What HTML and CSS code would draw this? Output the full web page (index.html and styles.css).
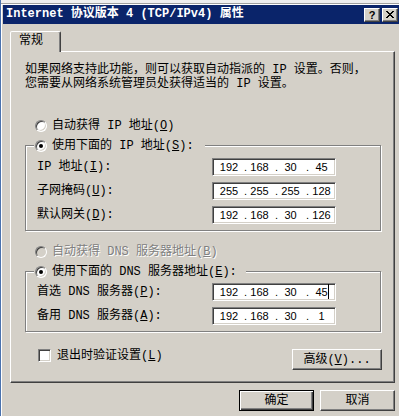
FILE: index.html
```html
<!DOCTYPE html>
<html lang="zh-CN">
<head>
<meta charset="utf-8">
<title>Internet 协议版本 4 (TCP/IPv4) 属性</title>
<link rel="stylesheet" href="styles.css">
</head>
<body>
<div class="win">
  <div class="topstrip"></div>
  <div class="inner">
    <div class="titlebar">
      <span class="title">Internet 协议版本 4 (TCP/IPv4) 属性</span>
      <div class="tbtns">
        <span class="tbtn help">?</span>
        <span class="tbtn close"><svg width="8" height="7" viewBox="0 0 8 7" shape-rendering="crispEdges"><path fill="#000" d="M0 0h2v1H0zM6 0h2v1H6zM1 1h2v1H1zM5 1h2v1H5zM2 2h4v1H2zM3 3h2v1H3zM2 4h4v1H2zM1 5h2v1H1zM5 5h2v1H5zM0 6h2v1H0zM6 6h2v1H6z"/></svg></span>
      </div>
    </div>
    <div class="client">
      <div class="tabs"><div class="tab">常规</div></div>
      <div class="panel">
        <p class="intro">如果网络支持此功能，则可以获取自动指派的 IP 设置。否则，<br>您需要从网络系统管理员处获得适当的 IP 设置。</p>

        <div class="opt first"><span class="radio"></span><span>自动获得 IP 地址(<u>O</u>)</span></div>
        <div class="group">
          <div class="legend l1"><span class="radio on"></span><span>使用下面的 IP 地址(<u>S</u>):</span></div>
          <div class="rows r1">
            <div class="row"><span class="lbl">IP 地址(<u>I</u>):</span><div class="ip"><span>192</span><i>.</i><span>168</span><i>.</i><span>30</span><i>.</i><span>45</span></div></div>
            <div class="row"><span class="lbl">子网掩码(<u>U</u>):</span><div class="ip"><span>255</span><i>.</i><span>255</span><i>.</i><span>255</span><i>.</i><span>128</span></div></div>
            <div class="row"><span class="lbl">默认网关(<u>D</u>):</span><div class="ip"><span>192</span><i>.</i><span>168</span><i>.</i><span>30</span><i>.</i><span>126</span></div></div>
          </div>
        </div>

        <div class="opt second dis"><span class="radio off"></span><span>自动获得 DNS 服务器地址(<u>B</u>)</span></div>
        <div class="group">
          <div class="legend l2"><span class="radio on"></span><span>使用下面的 DNS 服务器地址(<u>E</u>):</span></div>
          <div class="rows r2">
            <div class="row"><span class="lbl">首选 DNS 服务器(<u>P</u>):</span><div class="ip"><span>192</span><i>.</i><span>168</span><i>.</i><span>30</span><i>.</i><span>45<b class="caret"></b></span></div></div>
            <div class="row"><span class="lbl">备用 DNS 服务器(<u>A</u>):</span><div class="ip"><span>192</span><i>.</i><span>168</span><i>.</i><span>30</span><i>.</i><span>1</span></div></div>
          </div>
        </div>

        <div class="bottomrow">
          <div class="chk"><span class="check"></span><span>退出时验证设置(<u>L</u>)</span></div>
          <button class="btn adv" type="button">高级(<u>V</u>)...</button>
        </div>
      </div>
      <div class="footer">
        <button class="btn def" type="button">确定</button>
        <button class="btn" type="button">取消</button>
      </div>
    </div>
  </div>
</div>
</body>
</html>
```
FILE: styles.css
```css
* { box-sizing: border-box; }
html, body { margin: 0; padding: 0; }
body {
  width: 399px;
  height: 416px;
  overflow: hidden;
  background: #d4d0c8;
  color: #000;
  font: 12px/14px "Liberation Mono", "Noto Sans CJK SC", monospace;
}
.win {
  width: 399px;
  height: 416px;
  border-left: 1px solid #4a72ae;
  background: #d4d0c8;
  display: flex;
  flex-direction: column;
}
.topstrip {
  flex: none;
  height: 4px;
  background: #efefef;
  border-bottom: 1px solid #a0a0a0;
}
.inner {
  flex: 1;
  border-left: 1px solid #fff;
  border-top: 1px solid #fff;
  display: flex;
  flex-direction: column;
}
.titlebar {
  flex: none;
  height: 19px;
  margin-left: 1px;
  background: #0a246a;
  color: #fff;
  font-weight: bold;
  line-height: 19px;
  display: flex;
  align-items: center;
  justify-content: space-between;
  padding: 0 1px 0 3px;
  overflow: hidden;
  white-space: nowrap;
}
.tbtns { display: flex; gap: 2px; }
.tbtn {
  width: 16px;
  height: 14px;
  background: #d4d0c8;
  border: 1px solid;
  border-color: #fff #404040 #404040 #fff;
  box-shadow: inset -1px -1px #808080;
  display: flex;
  align-items: center;
  justify-content: center;
  color: #000;
}
.help { font: bold 11px/12px "Liberation Sans", sans-serif; }

.client {
  flex: 1;
  padding: 7px 4px 0 8px;
  display: flex;
  flex-direction: column;
}
.tabs {
  position: relative;
  z-index: 1;
  display: flex;
  height: 21px;
  margin-bottom: -1px;
}
.tab {
  width: 51px;
  height: 21px;
  background: #d4d0c8;
  border: 1px solid;
  border-bottom: none;
  border-color: #fff #404040 transparent #fff;
  border-radius: 2px 2px 0 0;
  box-shadow: inset -1px 0 #808080;
  padding: 2px 0 0 8px;
}
.panel {
  border: 1px solid;
  border-color: #fff #404040 #404040 #fff;
  box-shadow: inset -1px -1px #808080;
  padding: 11px 13px 12px 14px;
}
.intro { margin: 0; white-space: nowrap; }

.opt {
  display: flex;
  align-items: center;
  gap: 5px;
  height: 14px;
  padding-left: 10px;
  white-space: nowrap;
}
.opt.first { margin-top: 28px; }
.opt.second { margin-top: 14px; }
.dis { color: #808080; text-shadow: 1px 1px 0 #fff; }

.radio {
  flex: none;
  width: 12px;
  height: 12px;
  border-radius: 50%;
  border: 1px solid;
  border-color: #808080 #fff #fff #808080;
  box-shadow: inset 1px 1px #404040, inset -1px -1px #d4d0c8;
  background: #fff;
  display: flex;
  align-items: center;
  justify-content: center;
}
.radio.on::after {
  content: "";
  width: 4px;
  height: 4px;
  border-radius: 50%;
  background: #000;
}
.radio.off { background: #d4d0c8; }

.group {
  margin-top: 12px;
  border: 1px solid #808080;
  box-shadow: inset 1px 1px #fff, 1px 1px #fff;
}
.legend {
  display: flex;
  align-items: center;
  gap: 5px;
  height: 14px;
  margin: -7px 0 0 8px;
  padding-left: 1px;
  background: #d4d0c8;
  white-space: nowrap;
}
.legend.l1 { width: 171px; }
.legend.l2 { width: 212px; }
.rows {
  display: flex;
  flex-direction: column;
  gap: 6px;
  padding: 5px 0 6px 11px;
}
.rows.r2 { padding-top: 4px; }
.row { display: flex; align-items: center; }
.lbl { width: 175px; white-space: nowrap; }
.ip {
  width: 124px;
  height: 18px;
  background: #fff;
  border: 1px solid;
  border-color: #808080 #fff #fff #808080;
  box-shadow: inset 1px 1px #404040, inset -1px -1px #d4d0c8;
  padding: 0 1px;
  display: grid;
  grid-template-columns: 30px 4px 27px 4px 27px 4px 24px;
  font: 11px/16px "Liberation Sans", Arial, sans-serif;
}
.ip span { text-align: center; white-space: nowrap; }
.ip span + i + span { padding-right: 4px; }
.ip span:last-child { padding-right: 1px; }
.ip i { font-style: normal; }
.caret {
  display: inline-block;
  width: 0;
  height: 15px;
  border-left: 1px solid #000;
  margin-right: -1px;
  vertical-align: -3px;
}

.bottomrow {
  display: flex;
  justify-content: space-between;
  align-items: flex-start;
  margin-top: 17px;
  margin-right: -1px;
  padding-left: 13px;
}
.chk { display: flex; align-items: center; gap: 6px; height: 13px; white-space: nowrap; }
.check {
  flex: none;
  width: 13px;
  height: 13px;
  border: 1px solid;
  border-color: #808080 #fff #fff #808080;
  box-shadow: inset 1px 1px #404040, inset -1px -1px #d4d0c8;
  background: #fff;
}
.btn {
  appearance: none;
  margin: 0;
  padding: 0;
  height: 21px;
  background: #d4d0c8;
  color: #000;
  font: inherit;
  border: 1px solid;
  border-color: #fff #404040 #404040 #fff;
  box-shadow: inset -1px -1px #808080;
  display: flex;
  align-items: center;
  justify-content: center;
  white-space: nowrap;
}
.btn.adv { width: 90px; }
.btn.def {
  border-color: #000;
  box-shadow: inset 1px 1px #fff, inset -1px -1px #404040, inset -2px -2px #808080;
}
.footer {
  display: flex;
  justify-content: flex-end;
  gap: 6px;
  margin-top: 7px;
}
.footer .btn { width: 75px; }
```
